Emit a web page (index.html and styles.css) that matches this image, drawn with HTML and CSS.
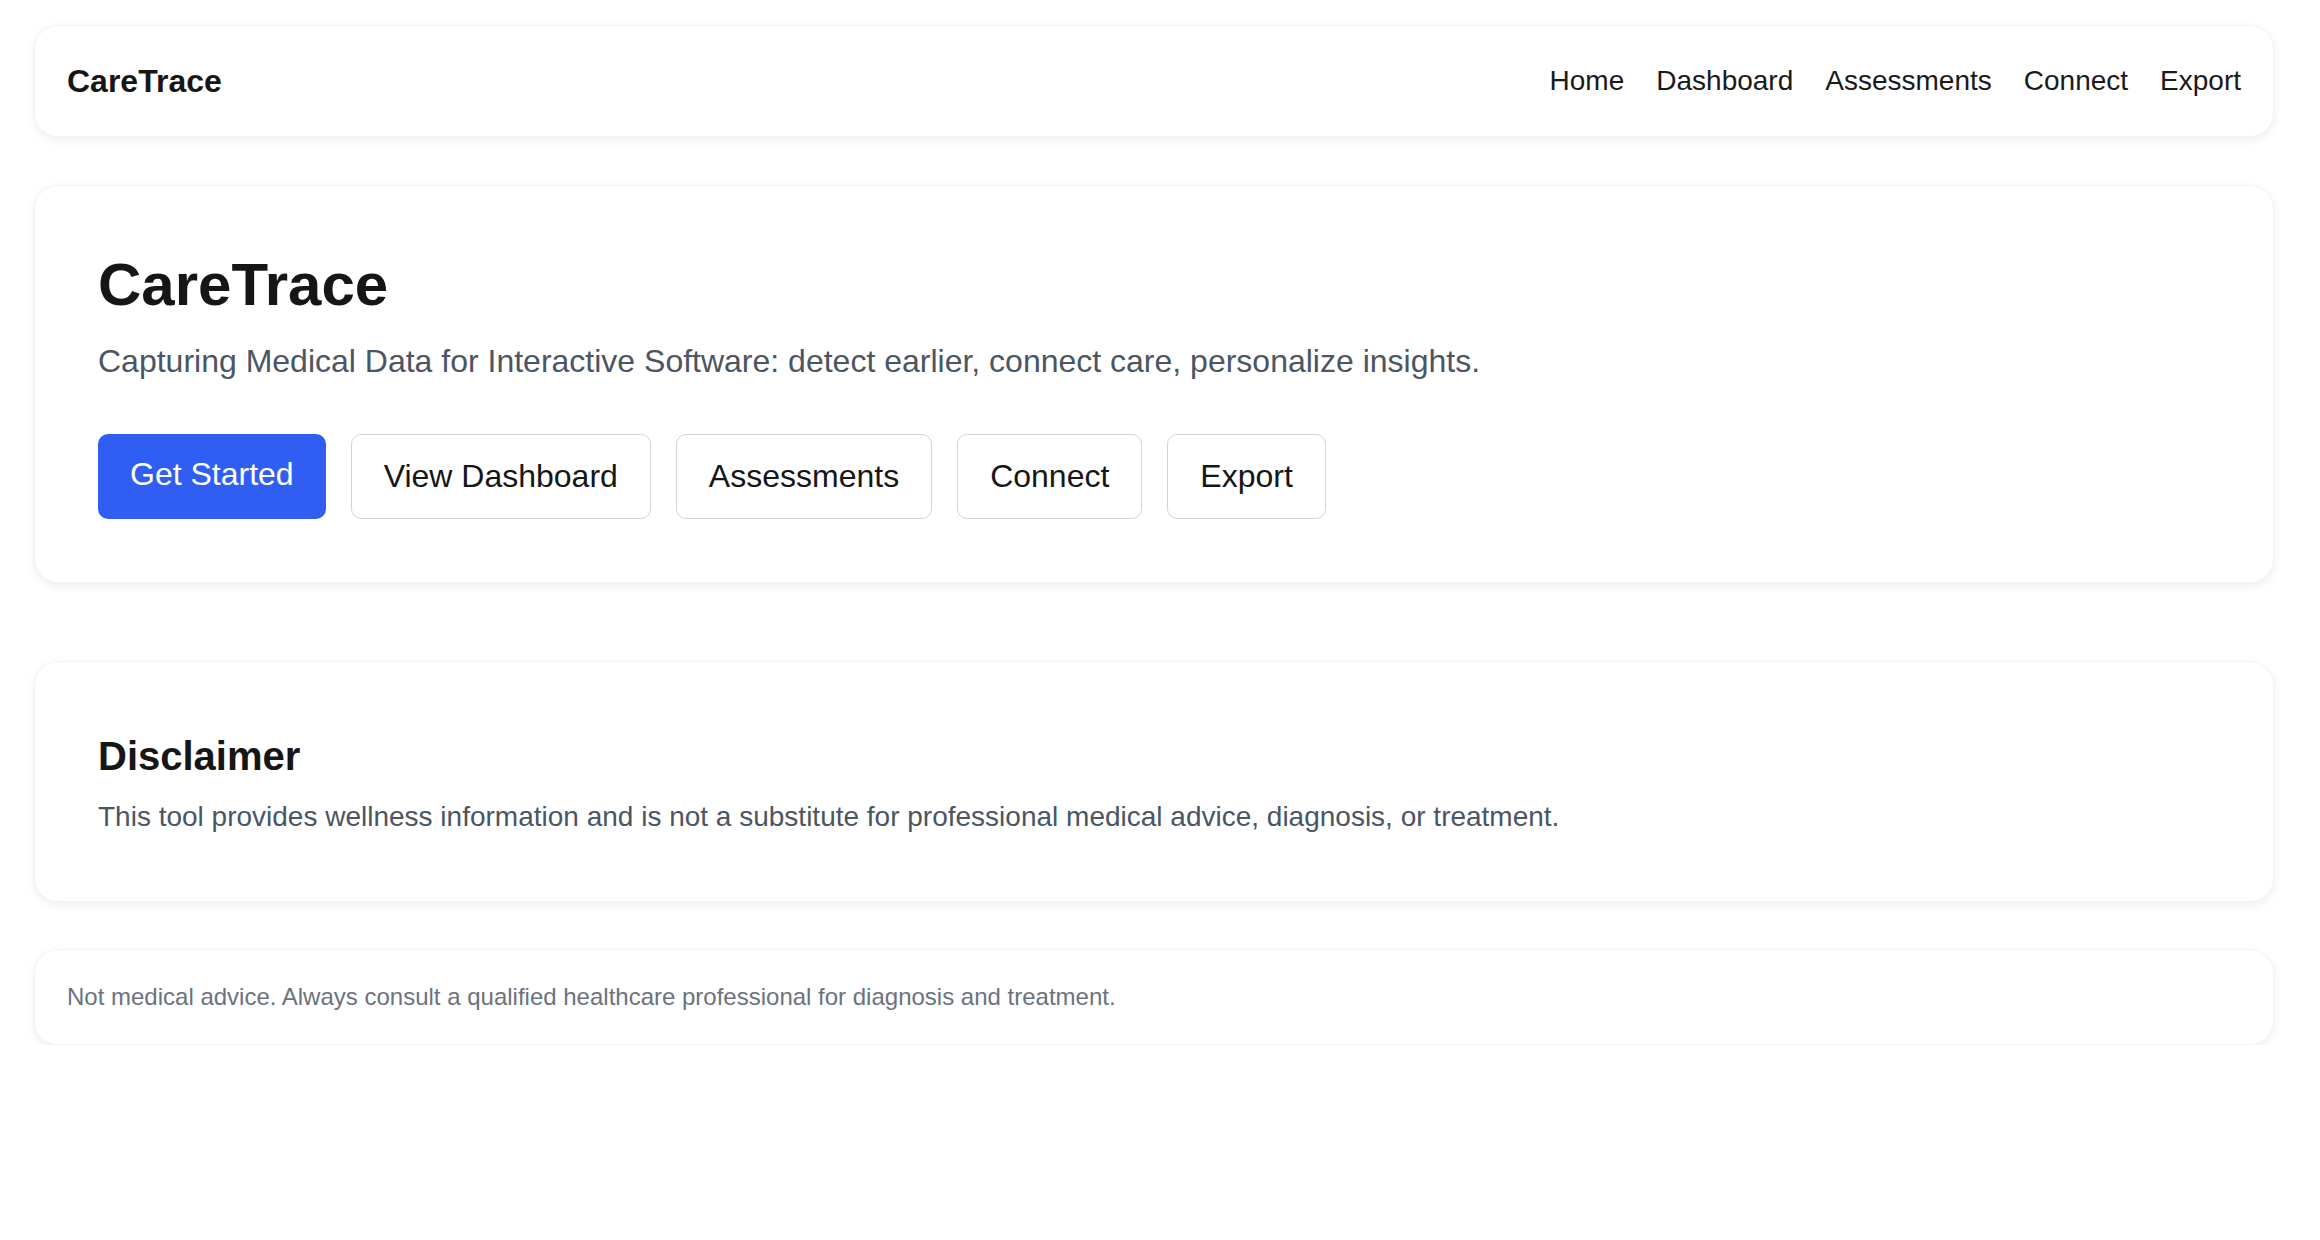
FILE: index.html
```html
<!DOCTYPE html>
<html lang="en">
<head>
    <meta charset="UTF-8">
    <title>CareTrace</title>
    <link rel="stylesheet" href="styles.css">
</head>
<body>
    <div class="page">
        <!-- top bar -->
        <header class="card topbar">
            <div class="brand">CareTrace</div>
            <nav class="nav-links">
                <a href="#">Home</a>
                <a href="#">Dashboard</a>
                <a href="#">Assessments</a>
                <a href="#">Connect</a>
                <a href="#">Export</a>
            </nav>
        </header>

        <!-- hero -->
        <section class="card hero">
            <h1 class="hero-title">CareTrace</h1>
            <p class="hero-sub">Capturing Medical Data for Interactive Software: detect earlier, connect care, personalize insights.</p>
            <div class="actions">
                <a class="btn btn-primary" href="#">Get Started</a>
                <a class="btn" href="#">View Dashboard</a>
                <a class="btn" href="#">Assessments</a>
                <a class="btn" href="#">Connect</a>
                <a class="btn" href="#">Export</a>
            </div>
        </section>

        <section class="card disclaimer">
            <h2>Disclaimer</h2>
            <p>This tool provides wellness information and is not a substitute for professional medical advice, diagnosis, or treatment.</p>
        </section>

        <footer class="card footer">
            Not medical advice. Always consult a qualified healthcare professional for diagnosis and treatment.
        </footer>
    </div>
</body>
</html>
```

FILE: styles.css
```css
body {
    margin: 0;
    background: #fff;
    font-family: "Liberation Sans", Arial, sans-serif;
    color: #161616;
}

.page {
    width: 2240px;
    margin: 0 0 0 34px;
    padding-top: 25px;
}

/* shared card look */
.card {
    background: #fff;
    border-radius: 24px;
    border: 1px solid #f4f4f4;
    box-shadow: 0 3px 10px rgba(0,0,0,0.07);
}

.topbar {
    display: flex;
    justify-content: space-between;
    align-items: center;
    padding: 31px 32px;
}

.brand {
    font-size: 32px;
    font-weight: bold;
    line-height: 48px;
}

.nav-links {
    display: flex;
    gap: 32px;
}

.nav-links a {
    font-size: 28px;
    color: #1a1a1a;
    text-decoration: none;
}

.hero {
    margin-top: 48px;
    padding: 63px 63px;
}

.hero-title {
    margin: 0;
    font-size: 60px;
    line-height: 72px;
}

.hero-sub {
    margin: 16px 0 0;
    font-size: 32px;
    line-height: 48px;
    color: #4b5563;
}

.actions {
    display: flex;
    gap: 25px;
    margin-top: 49px;
}

.btn {
    font-size: 32px;
    line-height: 48px;
    padding: 17px 32px;
    border: 1.5px solid #d1d5db;
    border-radius: 10px;
    color: #161616;
    text-decoration: none;
    background: #fff;
}

.btn-primary {
    padding: 16px 32px 21px;
    border: none;
    background: #305ef2;
    color: #fff;
}

.disclaimer {
    margin-top: 78px;
    padding: 64px 63px 63px;
}

.disclaimer h2 {
    margin: 0;
    font-size: 40px;
    line-height: 60px;
}

.disclaimer p {
    margin: 10px 0 0;
    font-size: 28px;
    line-height: 42px;
    color: #4b5563;
}

.footer {
    margin-top: 47px;
    padding: 29px 32px;
    font-size: 24px;
    line-height: 36px;
    color: #6b7280;
}
```
